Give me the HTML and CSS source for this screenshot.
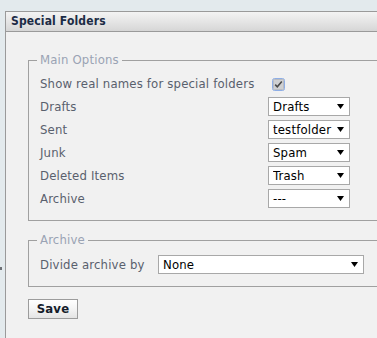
FILE: index.html
```html
<!DOCTYPE html>
<html lang="en">
<head>
<meta charset="utf-8">
<title>Special Folders</title>
<link rel="stylesheet" href="styles.css">
</head>
<body>
<span class="edge-mark"></span>
<div class="panel">
  <div class="panel-head">Special Folders</div>
  <div class="panel-body">
    <fieldset class="group">
      <legend>Main Options</legend>
      <div class="opts">
        <label>Show real names for special folders</label>
        <span class="chk"><svg width="13" height="13" viewBox="0 0 13 13"><rect x="0.5" y="0.5" width="12" height="12" rx="2" fill="#cfd0d2" stroke="#8eaee6"/><rect x="1.5" y="1.5" width="10" height="10" rx="1" fill="none" stroke="#b9bcc2"/><path d="M3.2 6.6 L5.3 8.8 L9.8 3.6" fill="none" stroke="#4a4a4a" stroke-width="1.6"/></svg></span>
        <label>Drafts</label>
        <span class="sel"><select><option>Drafts</option></select></span>
        <label>Sent</label>
        <span class="sel"><select><option>testfolder</option></select></span>
        <label>Junk</label>
        <span class="sel"><select><option>Spam</option></select></span>
        <label>Deleted Items</label>
        <span class="sel"><select><option>Trash</option></select></span>
        <label>Archive</label>
        <span class="sel"><select><option>---</option></select></span>
      </div>
    </fieldset>
    <fieldset class="group group-archive">
      <legend>Archive</legend>
      <div class="opts opts-archive">
        <label>Divide archive by</label>
        <span class="sel sel-wide"><select><option>None</option></select></span>
      </div>
    </fieldset>
    <button class="btn" type="button">Save</button>
  </div>
</div>
</body>
</html>
```
FILE: styles.css
```css
html, body {
  margin: 0;
  height: 100%;
  overflow: hidden;
}
body {
  background: #e3eaed;
  font-family: "DejaVu Sans Condensed", "DejaVu Sans", sans-serif;
  font-size: 13px;
  letter-spacing: 0.17px;
  color: #59606d;
  padding: 11px 0 0 5px;
  box-sizing: border-box;
  position: relative;
}
.edge-mark {
  position: absolute;
  left: 0;
  top: 267px;
  width: 2px;
  height: 3px;
  background: #6d7075;
}
.panel {
  box-sizing: border-box;
  height: 327px;
  overflow: hidden;
  background: #f1f1f1;
  border: 1px solid #9a9a9a;
  border-right: none;
  border-bottom: none;
}
.panel-head {
  height: 19px;
  line-height: 19px;
  padding-left: 5px;
  border-bottom: 1px solid #9a9a9a;
  background: linear-gradient(#f3f3f3, #e4e4e4 55%, #d6d6d6);
  font-weight: bold;
  font-size: 12px;
  letter-spacing: 0.15px;
  color: #1c2b45;
}
.panel-body {
  padding: 20px 0 0 22px;
}
.group {
  margin: 0 -30px 0 0;
  border: 1px solid #a0a0a0;
  padding: 6px 11px 12px;
}
.group legend {
  padding: 0 3px;
  margin-left: -3px;
  line-height: 16px;
  color: #9aa3b4;
}
.group-archive {
  margin-top: 11px;
  padding-top: 7px;
}
.opts {
  display: grid;
  grid-template-columns: 228px auto;
  grid-auto-rows: 19px;
  row-gap: 4px;
  align-items: center;
  justify-items: start;
}
.opts-archive {
  grid-template-columns: 118px auto;
}
.chk {
  display: flex;
  margin-left: 4px;
  margin-top: 1px;
}
.sel {
  position: relative;
  display: block;
  width: 82px;
  height: 19px;
}
.sel-wide {
  width: 206px;
}
.sel::after {
  content: "";
  position: absolute;
  right: 6px;
  top: 7px;
  width: 7px;
  height: 5px;
  background: #000;
  clip-path: polygon(0 0, 100% 0, 50% 100%);
  pointer-events: none;
}
.sel select {
  appearance: none;
  -webkit-appearance: none;
  box-sizing: border-box;
  width: 100%;
  height: 19px;
  margin: 0;
  padding: 0 0 0 4px;
  border: 1px solid #a8a8a8;
  border-radius: 0;
  background: #fff;
  color: #000;
  font: inherit;
  letter-spacing: 0.17px;
  line-height: 17px;
}
.btn {
  margin-top: 12px;
  width: 50px;
  height: 20px;
  padding: 0;
  border: 1px solid #9c9c9c;
  border-radius: 0;
  background: linear-gradient(#ffffff, #f4f4f4 50%, #e4e4e4);
  font-family: inherit;
  font-size: 13px;
  font-weight: bold;
  letter-spacing: 0.2px;
  color: #141c2a;
  line-height: 18px;
}
```
